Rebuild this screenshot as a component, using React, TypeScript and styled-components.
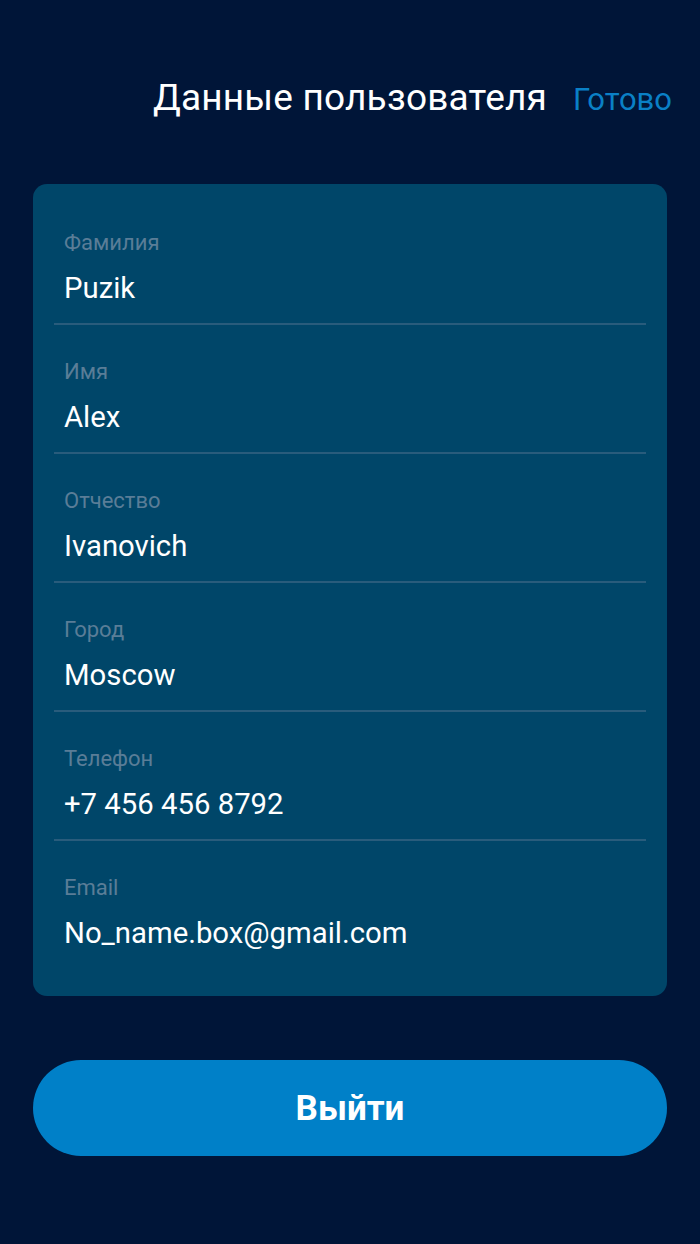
import styled, { createGlobalStyle } from 'styled-components';

const GlobalStyle = createGlobalStyle`
  html, body {
    margin: 0;
    padding: 0;
    background-color: #001538;
  }
  body {
    font-family: Roboto, 'Noto Sans', 'Liberation Sans', sans-serif;
    -webkit-font-smoothing: antialiased;
  }
`;

const Screen = styled.div`
  width: 700px;
  min-height: 1244px;
  background-color: #001538;
  padding: 0 33px;
  box-sizing: border-box;
  display: flex;
  flex-direction: column;
`;

const Header = styled.header`
  display: grid;
  grid-template-columns: 1fr auto 1fr;
  align-items: baseline;
  margin: 0 -33px;
  padding-top: 76px;
  height: 110px;
  box-sizing: border-box;
`;

const Title = styled.h1`
  grid-column: 2;
  margin: 0;
  font-size: 37px;
  font-weight: 400;
  color: #ffffff;
  line-height: 44px;
  letter-spacing: 0.2px;
`;

const Done = styled.button`
  grid-column: 3;
  justify-self: end;
  margin-right: 28px;
  background: none;
  border: none;
  padding: 0;
  font-family: inherit;
  font-size: 31px;
  font-weight: 400;
  color: #0a80c6;
  cursor: pointer;
`;

const Card = styled.section`
  margin-top: 74px;
  background-color: #004669;
  border-radius: 14px;
  padding: 12px 21px 28px;
  display: flex;
  flex-direction: column;
`;

const Field = styled.div<{ $last?: boolean }>`
  display: flex;
  flex-direction: column;
  gap: 16px;
  padding: 35px 10px 18px;
  border-bottom: ${(p) => (p.$last ? 'none' : '2px solid #295c7c')};
`;

const Label = styled.span`
  font-size: 22px;
  line-height: 24px;
  color: #5a7d97;
`;

const Value = styled.span`
  font-size: 29.3px;
  line-height: 34px;
  color: #ffffff;
`;

const LogoutButton = styled.button`
  margin-top: 64px;
  height: 96px;
  border: none;
  border-radius: 48px;
  background-color: #0080c8;
  color: #ffffff;
  font-family: inherit;
  font-size: 35px;
  font-weight: 700;
  cursor: pointer;
`;

const fields = [
  { label: 'Фамилия', value: 'Puzik' },
  { label: 'Имя', value: 'Alex' },
  { label: 'Отчество', value: 'Ivanovich' },
  { label: 'Город', value: 'Moscow' },
  { label: 'Телефон', value: '+7 456 456 8792' },
  { label: 'Email', value: 'No_name.box@gmail.com' },
];

const App = () => {
  return (
    <>
      <GlobalStyle />
      <Screen>
        <Header>
          <Title>Данные пользователя</Title>
          <Done>Готово</Done>
        </Header>

        <Card>
          {fields.map((field, index) => (
            <Field key={field.label} $last={index === fields.length - 1}>
              <Label>{field.label}</Label>
              <Value>{field.value}</Value>
            </Field>
          ))}
        </Card>

        <LogoutButton>Выйти</LogoutButton>
      </Screen>
    </>
  );
};

export default App;
